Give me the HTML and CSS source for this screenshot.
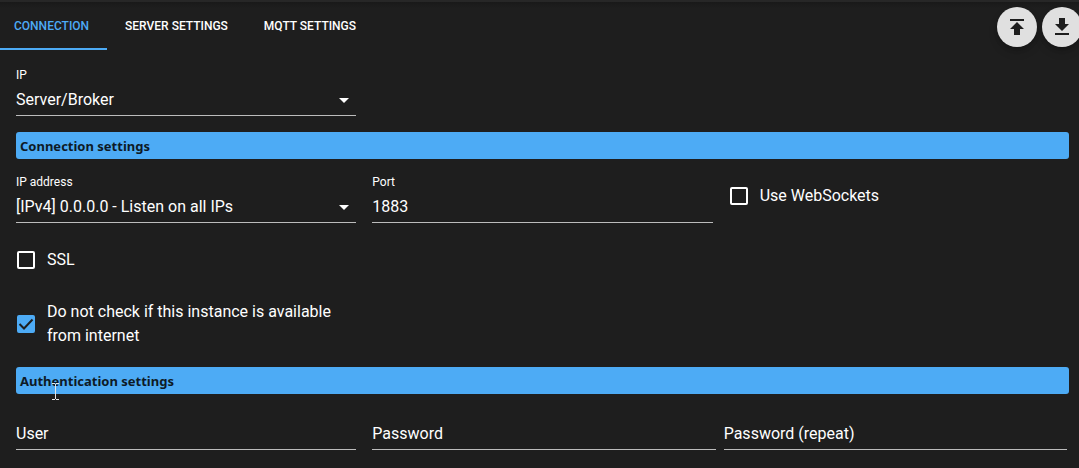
FILE: index.html
```html
<!DOCTYPE html>
<html lang="en">
<head>
<meta charset="utf-8">
<meta name="viewport" content="width=device-width, initial-scale=1">
<title>MQTT adapter settings</title>
<link rel="stylesheet" href="styles.css">
</head>
<body>
<header class="bar">
  <div class="tabs" role="tablist">
    <button class="tab tab-active" type="button" role="tab" aria-selected="true">CONNECTION</button>
    <button class="tab" type="button" role="tab" aria-selected="false">SERVER SETTINGS</button>
    <button class="tab" type="button" role="tab" aria-selected="false">MQTT SETTINGS</button>
  </div>
  <div class="actions">
    <button class="fab" type="button" aria-label="Import settings">
      <svg viewBox="0 0 24 24" width="24" height="24"><path d="M5 4v2h14V4H5zm0 10h4v6h6v-6h4l-7-7-7 7z"/></svg>
    </button>
    <button class="fab" type="button" aria-label="Export settings">
      <svg viewBox="0 0 24 24" width="24" height="24"><path d="M19 9h-4V3H9v6H5l7 7 7-7zM5 18v2h14v-2H5z"/></svg>
    </button>
  </div>
</header>

<main class="content">
  <form class="form">
    <div class="row">
      <div class="field">
        <label class="label" for="mode">IP</label>
        <div class="select">
          <select class="control" id="mode"><option>Server/Broker</option><option>Client/subscriber</option></select>
          <svg class="arrow" viewBox="0 0 24 24" width="24" height="24"><path d="M7 10l5 5 5-5z"/></svg>
        </div>
      </div>
    </div>

    <h2 class="heading">Connection settings</h2>

    <div class="row row-connection">
      <div class="field">
        <label class="label" for="address">IP address</label>
        <div class="select">
          <select class="control" id="address"><option>[IPv4] 0.0.0.0 - Listen on all IPs</option></select>
          <svg class="arrow" viewBox="0 0 24 24" width="24" height="24"><path d="M7 10l5 5 5-5z"/></svg>
        </div>
      </div>
      <div class="field">
        <label class="label" for="port">Port</label>
        <input class="control" id="port" type="text" inputmode="numeric" value="1883">
      </div>
      <label class="check"><input class="box" type="checkbox"><span>Use WebSockets</span></label>
    </div>

    <div class="row">
      <label class="check"><input class="box" type="checkbox"><span>SSL</span></label>
    </div>

    <div class="row">
      <label class="check check-long">
        <span class="tick">
          <input class="box" type="checkbox" checked>
          <svg class="mark" viewBox="0 0 18 18" width="18" height="18"><path d="M2.500 9l4.500 4.500L15.500 4.500"/></svg>
        </span>
        <span>Do not check if this instance is available from internet</span>
      </label>
    </div>

    <h2 class="heading">Authentication settings
      <svg class="caret" viewBox="0 0 7 17" width="7" height="17"><path d="M0 .5h3M4 .5h3M3.500 1v15M0 16.500h3M4 16.500h3"/></svg>
    </h2>

    <div class="row row-auth">
      <input class="control" type="text" placeholder="User" aria-label="User">
      <div class="pair">
        <input class="control" type="password" placeholder="Password" aria-label="Password">
        <input class="control" type="password" placeholder="Password (repeat)" aria-label="Password (repeat)">
      </div>
    </div>
  </form>
</main>
</body>
</html>
```
FILE: styles.css
```css
* {
  box-sizing: border-box;
}

body {
  margin: 0;
  overflow: hidden;
  background: #1e1e1e;
  color: #fff;
  font-family: Roboto, "Liberation Sans", sans-serif;
  font-size: 16px;
  line-height: 24px;
}

.bar {
  display: flex;
  justify-content: space-between;
  border-top: 2px solid #272727;
  background: linear-gradient(#191919, #1e1e1e 6px);
}

.tabs {
  display: flex;
}

.tab {
  height: 48px;
  padding: 2px 18px 0;
  border: 0;
  border-bottom: 2px solid transparent;
  background: none;
  color: #fff;
  font: 500 12px/20px Roboto, "Liberation Sans", sans-serif;
}

.tab-active {
  padding-left: 14px;
  border-bottom-color: #4dabf5;
  color: #4dabf5;
}

.actions {
  display: flex;
  gap: 5px;
  margin-right: -3px;
  padding-top: 5px;
}

.fab {
  display: grid;
  place-items: center;
  width: 40px;
  height: 40px;
  padding: 0;
  border: 0;
  border-radius: 50%;
  background: #e0e0e0;
  box-shadow: 0 3px 5px -1px rgba(0, 0, 0, 0.2), 0 5px 10px rgba(0, 0, 0, 0.14);
  fill: #1e1e1e;
}

.content {
  padding: 16px 10px 16px 16px;
}

.form {
  display: flex;
  flex-direction: column;
  gap: 16px;
}

.row {
  display: grid;
  grid-template-columns: repeat(3, minmax(0, 1fr));
  gap: 16px;
}

.row-connection {
  margin-top: -2px;
}

.row-auth {
  margin-top: 8px;
}

.pair {
  display: flex;
  grid-column: span 2;
  gap: 8px;
  padding-right: 2px;
}

.field {
  display: flex;
  flex-direction: column;
}

.label {
  font-size: 12px;
  line-height: 18px;
}

.select {
  position: relative;
}

.control {
  display: block;
  width: 100%;
  height: 32px;
  margin: 0;
  padding: 0;
  border: 0;
  border-bottom: 1px solid #bcbcbc;
  border-radius: 0;
  outline: 0;
  appearance: none;
  background: none;
  color: #fff;
  font: inherit;
}

.control::placeholder {
  color: #fff;
  opacity: 1;
}

.arrow {
  position: absolute;
  top: 4px;
  right: 0;
  fill: #fff;
  pointer-events: none;
}

.heading {
  position: relative;
  margin: 0;
  padding: 4px 4px 3px;
  border-radius: 3px;
  background: #4dabf5;
  color: #0d1a26;
  font: 700 13px/20px "Noto Sans", "Open Sans", sans-serif;
}

.caret {
  position: absolute;
  top: 16px;
  left: 36px;
  fill: none;
  stroke: #e6e6e6;
}

.check {
  display: flex;
  align-items: center;
  gap: 12px;
  min-height: 42px;
  padding-left: 1px;
}

.row-connection .check {
  align-self: start;
  min-height: 46px;
}

.check-long {
  padding-top: 3px;
  padding-bottom: 3px;
}

.box {
  display: block;
  flex: none;
  width: 18px;
  height: 18px;
  margin: 0;
  border: 2px solid #fff;
  border-radius: 2px;
  appearance: none;
}

.box:checked {
  border-color: #4dabf5;
  background: #4dabf5;
}

.tick {
  position: relative;
  flex: none;
}

.mark {
  position: absolute;
  inset: 0;
  fill: none;
  stroke: #1e1e1e;
  stroke-width: 2;
  pointer-events: none;
}
```
